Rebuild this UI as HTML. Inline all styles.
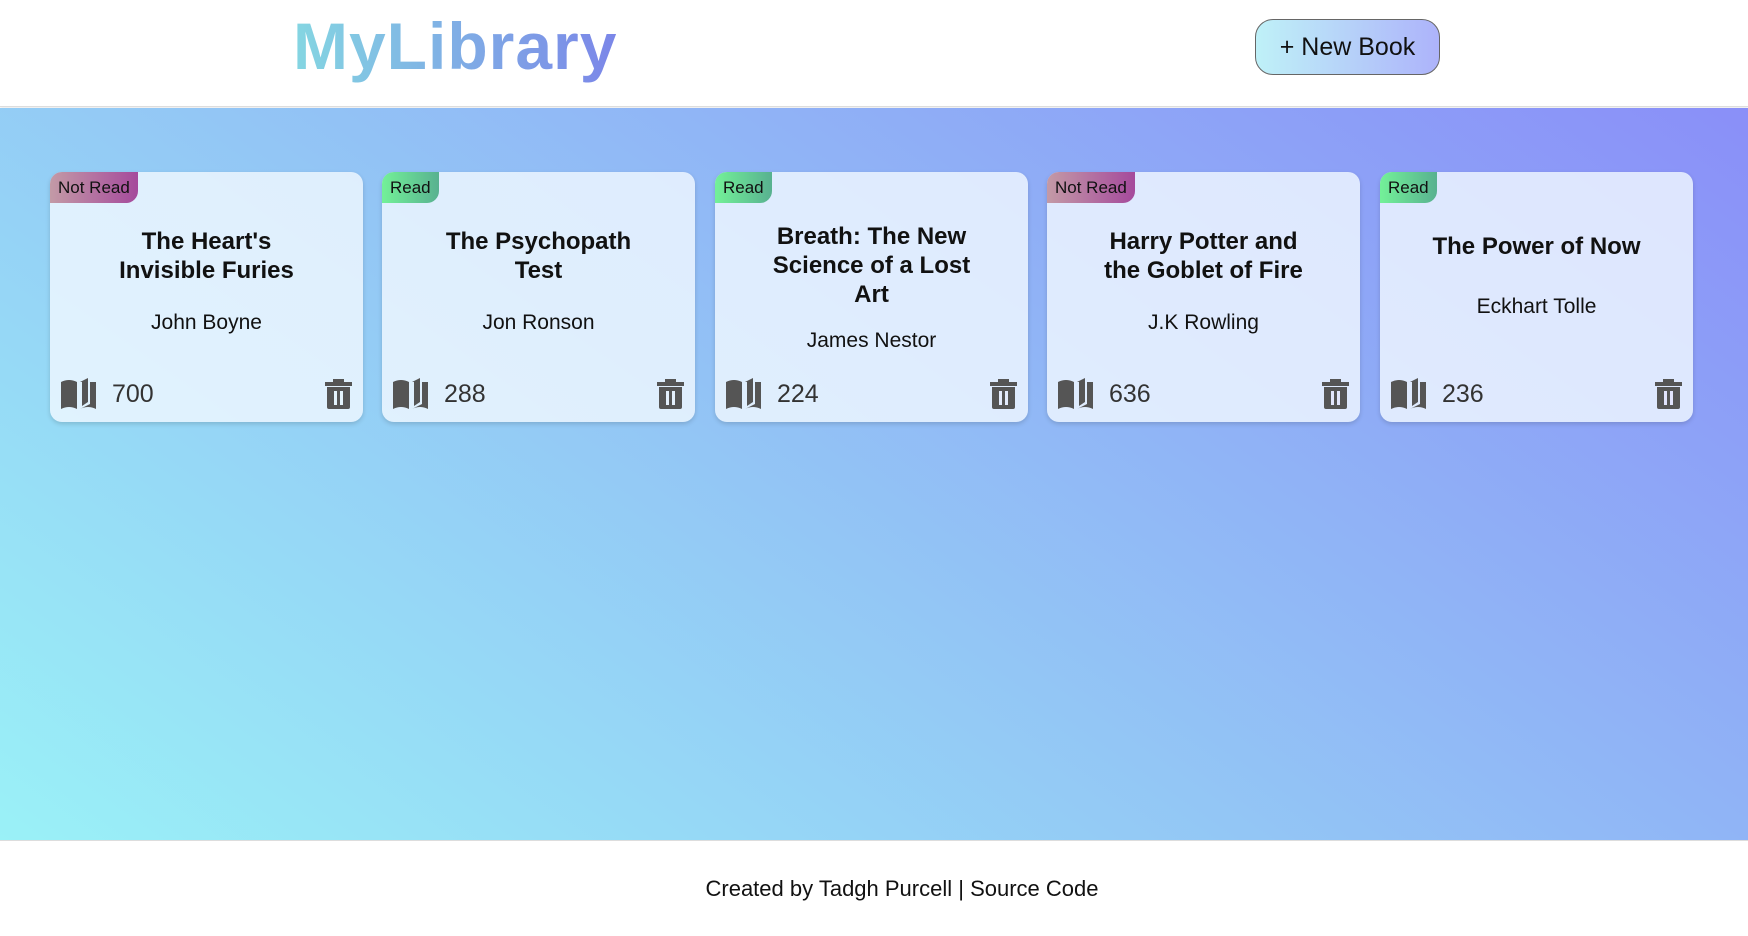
<!DOCTYPE html>
<html><head><meta charset="utf-8"><style>
*{box-sizing:border-box;margin:0;padding:0}
html,body{width:1748px;height:935px;overflow:hidden;font-family:"Liberation Sans",sans-serif;color:#111}
header{height:107px;background:#fff;position:relative;border-bottom:1px solid #ddd;box-shadow:0 1px 3px rgba(0,0,0,.1)}
.logo{position:absolute;left:293px;top:8px;font-size:66px;font-weight:bold;letter-spacing:1px;background:linear-gradient(90deg,#84d6e2,#7b86e8);-webkit-background-clip:text;background-clip:text;color:transparent}
.btn{position:absolute;left:1255px;top:19px;width:185px;height:56px;border:1px solid #666;border-radius:18px;background:linear-gradient(90deg,#bff1f8,#adb3fa);font-size:25px;display:flex;align-items:center;justify-content:center;color:#111}
main{position:absolute;top:108px;left:0;width:1748px;height:732px;background:linear-gradient(35deg,#9af1f7 0%,#93c6f5 45%,#8a8ff8 100%)}
.card{position:absolute;top:64px;width:313px;height:250px;border-radius:12px;background:rgba(240,248,255,.82);box-shadow:0 2px 5px rgba(0,0,0,.15)}
.badge{position:absolute;left:0;top:0;height:31px;padding:0 8px;border-radius:12px 0 12px 0;font-size:17px;line-height:31px;color:#111}
.nr{background:linear-gradient(90deg,#c39aa6,#a54a9c)}
.rd{background:linear-gradient(90deg,#73f198,#58b190)}
.content{position:absolute;left:15px;right:15px;top:38px;height:142px;display:flex;flex-direction:column;justify-content:center;align-items:center;text-align:center}
.t{font-size:24px;font-weight:bold;line-height:29px;padding:0 30px}
.a{font-size:21px;margin-top:26px}
.foot{position:absolute;left:11px;right:11px;bottom:12px;height:32px;display:flex;align-items:center}
.foot span{font-size:25px;color:#333;margin-left:16px}
.trash{margin-left:auto}
footer{position:absolute;top:840px;left:0;width:1748px;height:95px;background:#fff;border-top:1px solid #ddd;text-align:center;font-size:22px;line-height:95px;padding-left:56px}
</style></head><body>
<header><div class="logo">MyLibrary</div><div class="btn">+ New Book</div></header>
<main>
<div class="card" style="left:50px"><div class="badge nr">Not Read</div><div class="content"><div class="t">The Heart's Invisible Furies</div><div class="a">John Boyne</div></div><div class="foot"><svg width="35" height="32" viewBox="0 0 35 32"><path d="M0 4 Q8 0 16 4 V31 Q8 27 0 31Z M19 4 L27 0 V24 L21 28 V4Z M29 4 L35 4 V31 Q27 27 19 31 L29 26Z" fill="#555"/></svg><span>700</span><svg class="trash" width="27" height="30" viewBox="0 0 27 30"><path d="M0 3 H8 V0 H19 V3 H27 V7 H0Z M2 8 H25 V28 Q25 30 23 30 H4 Q2 30 2 28Z" fill="#555"/><rect x="9" y="12" width="3" height="14" fill="#e4f3fc"/><rect x="15" y="12" width="3" height="14" fill="#e4f3fc"/></svg></div></div>
<div class="card" style="left:382px"><div class="badge rd">Read</div><div class="content"><div class="t">The Psychopath Test</div><div class="a">Jon Ronson</div></div><div class="foot"><svg width="35" height="32" viewBox="0 0 35 32"><path d="M0 4 Q8 0 16 4 V31 Q8 27 0 31Z M19 4 L27 0 V24 L21 28 V4Z M29 4 L35 4 V31 Q27 27 19 31 L29 26Z" fill="#555"/></svg><span>288</span><svg class="trash" width="27" height="30" viewBox="0 0 27 30"><path d="M0 3 H8 V0 H19 V3 H27 V7 H0Z M2 8 H25 V28 Q25 30 23 30 H4 Q2 30 2 28Z" fill="#555"/><rect x="9" y="12" width="3" height="14" fill="#e4f0fc"/><rect x="15" y="12" width="3" height="14" fill="#e4f0fc"/></svg></div></div>
<div class="card" style="left:715px"><div class="badge rd">Read</div><div class="content" style="top:44px"><div class="t">Breath: The New Science of a Lost Art</div><div class="a" style="margin-top:20px">James Nestor</div></div><div class="foot"><svg width="35" height="32" viewBox="0 0 35 32"><path d="M0 4 Q8 0 16 4 V31 Q8 27 0 31Z M19 4 L27 0 V24 L21 28 V4Z M29 4 L35 4 V31 Q27 27 19 31 L29 26Z" fill="#555"/></svg><span>224</span><svg class="trash" width="27" height="30" viewBox="0 0 27 30"><path d="M0 3 H8 V0 H19 V3 H27 V7 H0Z M2 8 H25 V28 Q25 30 23 30 H4 Q2 30 2 28Z" fill="#555"/><rect x="9" y="12" width="3" height="14" fill="#e3ebfc"/><rect x="15" y="12" width="3" height="14" fill="#e3ebfc"/></svg></div></div>
<div class="card" style="left:1047px"><div class="badge nr">Not Read</div><div class="content"><div class="t">Harry Potter and the Goblet of Fire</div><div class="a">J.K Rowling</div></div><div class="foot"><svg width="35" height="32" viewBox="0 0 35 32"><path d="M0 4 Q8 0 16 4 V31 Q8 27 0 31Z M19 4 L27 0 V24 L21 28 V4Z M29 4 L35 4 V31 Q27 27 19 31 L29 26Z" fill="#555"/></svg><span>636</span><svg class="trash" width="27" height="30" viewBox="0 0 27 30"><path d="M0 3 H8 V0 H19 V3 H27 V7 H0Z M2 8 H25 V28 Q25 30 23 30 H4 Q2 30 2 28Z" fill="#555"/><rect x="9" y="12" width="3" height="14" fill="#e2e6fc"/><rect x="15" y="12" width="3" height="14" fill="#e2e6fc"/></svg></div></div>
<div class="card" style="left:1380px"><div class="badge rd">Read</div><div class="content" style="top:32px"><div class="t">The Power of Now</div><div class="a" style="margin-top:34px">Eckhart Tolle</div></div><div class="foot"><svg width="35" height="32" viewBox="0 0 35 32"><path d="M0 4 Q8 0 16 4 V31 Q8 27 0 31Z M19 4 L27 0 V24 L21 28 V4Z M29 4 L35 4 V31 Q27 27 19 31 L29 26Z" fill="#555"/></svg><span>236</span><svg class="trash" width="27" height="30" viewBox="0 0 27 30"><path d="M0 3 H8 V0 H19 V3 H27 V7 H0Z M2 8 H25 V28 Q25 30 23 30 H4 Q2 30 2 28Z" fill="#555"/><rect x="9" y="12" width="3" height="14" fill="#e1e3fc"/><rect x="15" y="12" width="3" height="14" fill="#e1e3fc"/></svg></div></div>
</main>
<footer>Created by Tadgh Purcell | Source Code</footer>
</body></html>
